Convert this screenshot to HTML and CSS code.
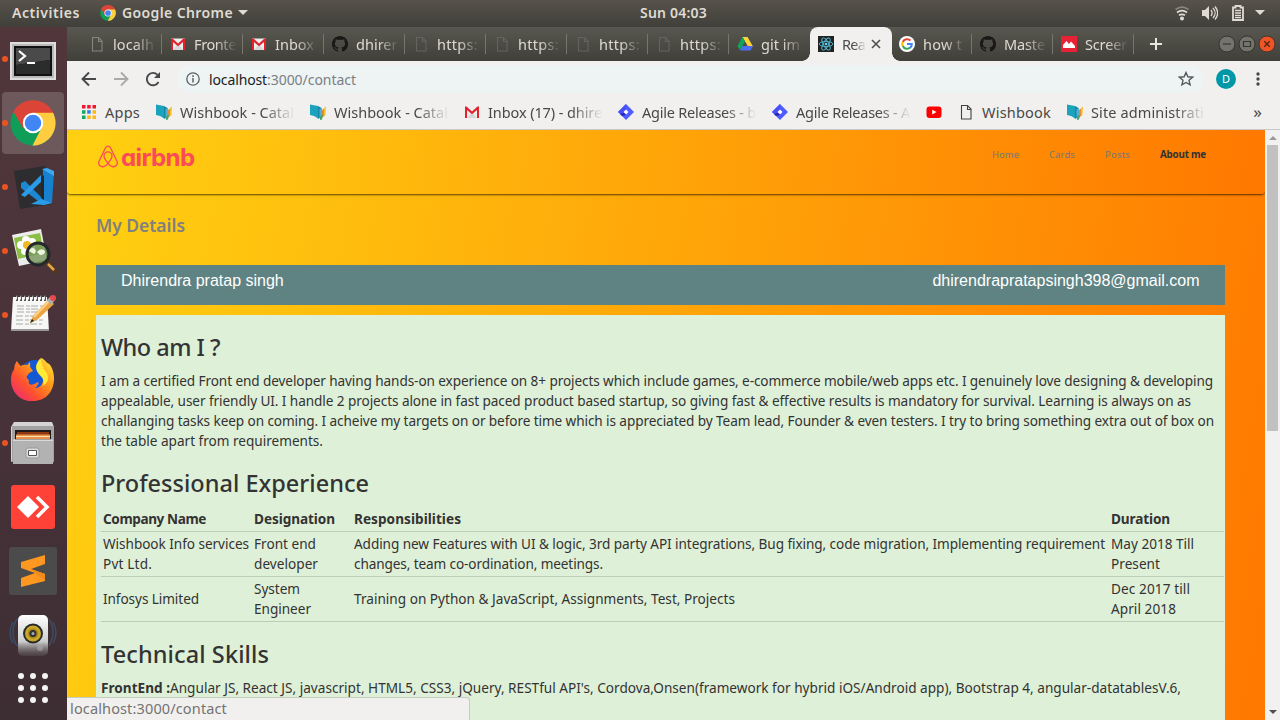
FILE: index.html
```html
<!DOCTYPE html>
<html lang="en">
<head>
<meta charset="utf-8">
<title>React App</title>
<link rel="stylesheet" href="styles.css">
</head>
<body>
<svg class="defs" width="0" height="0">
  <defs>
    <symbol id="chrome" viewBox="0 0 48 48"><circle cx="24" cy="24" r="23.5" fill="#0f9d58"/><path d="M24 24 3.600 12.200A23.500 23.500 0 0 1 44.400 12.300L45 14H24Z" fill="#db4437"/><path d="M24 13h20.800A23.500 23.500 0 0 1 23.500 47.500L33 29Z" fill="#ffcd40"/><path d="M3.600 12.200 14 30 24 24l0-11h20.800l-.4-.8A23.500 23.500 0 0 0 3.600 12.200Z" fill="#db4437"/><circle cx="24" cy="24" r="10.700" fill="#fff"/><circle cx="24" cy="24" r="8.600" fill="#4285f4"/></symbol>
    <symbol id="page" viewBox="0 0 16 16"><path d="M3.500 1.500h6l3.500 3.500v10H3.500zM9.500 1.500v4h3.500" fill="none" stroke="currentColor" stroke-width="1.100"/></symbol>
    <symbol id="gmail" viewBox="0 0 16 16"><path d="M1 2.500h14v11.500H1z" fill="#eee"/><path d="M3 14 8 8l5 6z" fill="#d8d8d8"/><path d="M1 14V2.500h1.500L8 7.500l5.500-5H15V14h-2V6L8 10.300 3 6v8z" fill="#e0222c"/></symbol>
    <symbol id="github" viewBox="0 0 16 16"><path fill="#1b1817" d="M8 0C3.580 0 0 3.580 0 8c0 3.540 2.290 6.530 5.470 7.590.4.070.55-.17.55-.38 0-.19-.01-.82-.01-1.490-2.010.37-2.530-.49-2.690-.94-.09-.23-.48-.94-.82-1.130-.28-.15-.68-.52-.01-.53.63-.01 1.080.58 1.230.82.720 1.210 1.870.87 2.330.66.070-.52.280-.87.510-1.070-1.780-.2-3.640-.89-3.640-3.950 0-.87.310-1.590.82-2.150-.08-.2-.36-1.020.08-2.120 0 0 .67-.21 2.200.82.640-.18 1.320-.27 2-.27s1.360.09 2 .27c1.530-1.040 2.200-.82 2.200-.82.440 1.100.16 1.920.08 2.120.510.56.82 1.270.82 2.150 0 3.070-1.870 3.750-3.650 3.950.290.25.540.73.540 1.480 0 1.070-.01 1.930-.01 2.200 0 .21.150.46.550.38A8.010 8.010 0 0 0 16 8c0-4.420-3.580-8-8-8z"/></symbol>
    <symbol id="wish" viewBox="0 0 16 16"><path d="M0 .5 8 2v12.500l-3-2-1-.5-4-1z" fill="#1ba2bd"/><path d="m8 2 3.500 2v9l-3.500 2z" fill="#1488a6"/><path d="m9.500 5 2.500-1v9l-2.500 1z" fill="#54afd4"/><path d="m12 6 2-1.500v7.500l-2 2z" fill="#e98b36"/><path d="m14 4 2-1.500-.5 8.500-1.500 1.500z" fill="#f4c430"/><path d="m10 12.500 3-2-1 5-2 .5z" fill="#44a66c"/></symbol>
    <symbol id="diamond" viewBox="0 0 16 16"><path d="M8 0l8 8-8 8-8-8z" fill="#4c5cff"/><path d="M8 0v8l-4 3-4-3z" fill="#4650f4"/><path d="M8 8v3l-4 1-2-2z" fill="#2626bd"/><path d="M8 5.500 10.500 8 8 10.500 5.500 8z" fill="#fff"/></symbol>
  </defs>
</svg>

<header class="topbar">
  <span class="activities" data-w="68">Activities</span>
  <svg class="app-icon" viewBox="0 0 48 48"><use href="#chrome"/></svg>
  <span data-w="111">Google Chrome</span>
  <i class="caret"></i>
  <span class="clock" data-w="67">Sun 04:03</span>
  <div class="tray">
    <svg width="16" height="16" viewBox="0 0 16 16" fill="none" stroke="#dfdbd2" stroke-width="1.700"><path d="M1.500 4.500c4-3 9-3 13 0" opacity=".4"/><path d="M3 7.500c3-2.300 7-2.300 10 0"/><path d="M5 10.300c2-1.300 4-1.300 6 0"/><circle cx="8" cy="13.500" r="1.200" fill="#dfdbd2"/></svg>
    <svg class="vol" width="17" height="16" viewBox="0 0 17 16"><path d="M1 5h3l4-4v14l-4-4H1z" fill="#dfdbd2"/><path d="M10 5c1.500 2 1.500 4 0 6M12 3c2.800 3 2.800 7 0 10M14 1.500c3.300 4 3.300 9 0 13" fill="none" stroke="#dfdbd2" stroke-width="1.300"/></svg>
    <svg class="bat" width="12" height="16" viewBox="0 0 12 16"><path d="M1 2.500h2.500V1h5v1.500H11V15H1z" fill="none" stroke="#dfdbd2" stroke-width="1.800"/><path d="M3 5.500h6M3 8h6M3 10.500h6M3 12.700h6" stroke="#dfdbd2" stroke-width="1.300"/></svg>
    <i class="caret"></i>
  </div>
</header>

<div class="desktop">
  <nav class="dock">
    <div class="launcher run"><svg width="46" height="38" viewBox="0 0 46 38"><path d="M0 0h46v38H0z" fill="#dedede"/><path d="M2 2h42v34H2z" fill="#b9b9b9"/><path d="M4 4h38v30H4z" fill="#111"/><path d="M6 6h34v12L6 23z" fill="#494a49"/><path d="M6 23l34-5v14H6z" fill="#2b2c2c"/><path d="m9 9 6 5-6 5M17 21h8" fill="none" stroke="#fff" stroke-width="2.200"/></svg></div>
    <div class="launcher run active"><svg width="46" height="46" viewBox="0 0 48 48"><use href="#chrome"/></svg></div>
    <div class="launcher run"><svg width="48" height="48" viewBox="0 0 48 48"><path d="m5 8 31-5 7 38-32 5z" fill="#2d2d30"/><path d="m34 6 11 3-2 31-10 2z" fill="#1780cf"/><path d="m33 6 5-1 7 3v5z" fill="#3ba9f3"/><path d="m12 20 4-2 17 17v6L12 25z" fill="#1c88d4"/><path d="m12 32 20-20v7L16 34zM32 36l11 4-8 2-13-1z" fill="#2b9ae7"/><path d="M35 12v25l-3-2V15z" fill="#25272a"/></svg></div>
    <div class="launcher run"><svg width="48" height="48" viewBox="0 0 48 48"><path d="m3 8 29-6 6 31-28 6z" fill="#ececec"/><path d="m5 11 26-5 4 20-26 6z" fill="#8bbf43"/><g fill="#fff"><circle cx="17" cy="13" r="4"/><circle cx="12" cy="18" r="4"/><circle cx="16" cy="24" r="4"/><circle cx="22" cy="21" r="4"/><circle cx="23" cy="15" r="4"/></g><circle cx="18" cy="18" r="4" fill="#efba23"/><path d="m37 35 9 9" stroke="#57391d" stroke-width="5" stroke-linecap="round"/><path d="m39 37 6 6" stroke="#e5a54c" stroke-width="2.500"/><circle cx="29" cy="27" r="11" fill="#75965bcc" stroke="#24282a" stroke-width="3"/><path d="M20 24q2-5 6-2 2 3-1 5zM28 25q4-5 8-1 0 4-5 4z" fill="#eef5df"/></svg></div>
    <div class="launcher run"><svg width="48" height="48" viewBox="0 0 48 48"><path d="M4 6h34l2 34H2z" fill="#f7f7f5"/><path d="M2 38h38v2H2z" fill="#999"/><path d="M7 7h30" stroke="#555" stroke-width="6" stroke-dasharray="2 2"/><path d="M7 7h30" stroke="#eee" stroke-width="3" stroke-dasharray="1 3"/><path d="M8 15h27M8 18h22M8 21h24M7 25h20M7 29h28M7 33h26" stroke="#aaa" stroke-dasharray="7 2 4 1"/><path d="m21 32 3-7L40 8l5 5-17 16z" fill="#eca341"/><path d="m25 26 16-17" stroke="#ffd284" stroke-width="2"/><path d="m38 9 4-4 4 4-4 5z" fill="#a9afb0"/><circle cx="44" cy="7" r="3" fill="#e84a4c"/><path d="m21 32 2-4 2 2z" fill="#222"/></svg></div>
    <div class="launcher"><svg width="44" height="46" viewBox="0 0 46 46" preserveAspectRatio="none"><defs><linearGradient id="fox" x1="1" x2="0" y2="1"><stop stop-color="#fff044"/><stop offset=".35" stop-color="#ff9d19"/><stop offset=".65" stop-color="#ff512f"/><stop offset="1" stop-color="#e62285"/></linearGradient></defs><circle cx="25" cy="21" r="17" fill="#1558d4"/><path d="M6 5l4 5q3-2 7-1l3-3v5l3 4-4 2-3 4 3 4c-2 3 2 6 9 1 2 0 0 4-3 6 8 0 10-8 8-12-8-5-5-13-1-18 4 2 5 5 8 6 3 3 5 9 5 14 0 14-9 23-22 23C10 46 0 36 0 24q0-7 3-10 0-5 3-9z" fill="url(#fox)"/><path d="M31 2q-9 9-1 17 6 5 3 11 8-4 5-12Q31 9 31 2z" fill="#ffea38"/></svg></div>
    <div class="launcher run"><svg width="44" height="44" viewBox="0 0 44 44"><path d="M3 1h38l2 5v34q0 1-2 1H2q-2 0-2-1V6z" fill="#d4d4d4"/><path d="M1 5h42v36H1z" fill="#a2a2a2"/><path d="M4 9h36v10H4z" fill="#1f1a19"/><path d="M6 11h32v3H6z" fill="#92360e"/><path d="M5 13.500h34v4.500H5z" fill="#e8914b"/><path d="M5 15.500h34" stroke="#ffe0ac" stroke-width="1.200"/><path d="M2 18.500h40V43H2z" fill="#b2b2b2"/><path d="M2 18.500h40v1.500H2z" fill="#d8d8d8"/><rect x="15" y="27" width="13" height="10" rx="2" fill="#ddd" stroke="#999"/><path d="M17.500 29.500h8v5h-8z" fill="#fff" stroke="#555"/></svg></div>
    <div class="launcher"><svg width="44" height="44" viewBox="0 0 44 44"><rect width="44" height="44" rx="3" fill="#ff4237"/><path d="m17 11 11 11-11 11L6 22z" fill="#fff"/><path d="m26 12 10 10-10 10" fill="none" stroke="#fff" stroke-width="3.500"/></svg></div>
    <div class="launcher"><svg width="48" height="48" viewBox="0 0 48 48"><rect width="48" height="48" rx="3" fill="#4b4b4b"/><path d="m12 15 24-7v9l-14 5 14 5v7l-24 6v-9l14-5-14-5z" fill="#ff9820"/><path d="m22 22 14 5v7l-10-8z" fill="#f08c1b"/></svg></div>
    <div class="launcher"><svg width="48" height="44" viewBox="0 0 48 44"><defs><linearGradient id="spk" x2="0" y2="1"><stop stop-color="#fff"/><stop offset=".65" stop-color="#ccc"/><stop offset="1" stop-color="#777" stop-opacity=".2"/></linearGradient></defs><path d="M8 6q-8 13 0 27M4 9q-6 11 0 21M40 6q8 13 0 27M44 9q6 11 0 21" stroke="#3d4c66" stroke-width="1.500" fill="none"/><rect x="9" y="2" width="30" height="41" rx="5" fill="url(#spk)"/><circle cx="24" cy="20.500" r="10" fill="#27292a"/><circle cx="24" cy="20.500" r="6.500" fill="#a58414" stroke="#c9a728" stroke-width="3"/><circle cx="24" cy="20.500" r="3.500" fill="#303239"/><circle cx="24" cy="20.500" r="1.500" fill="#aaa"/><circle cx="31" cy="35" r="3" fill="#aaa" opacity=".6"/></svg></div>
    <div class="launcher apps"><svg width="30" height="30" viewBox="0 0 30 30" fill="#f4f4f2"><circle cx="3" cy="3" r="3"/><circle cx="15" cy="3" r="3"/><circle cx="27" cy="3" r="3"/><circle cx="3" cy="15" r="3"/><circle cx="15" cy="15" r="3"/><circle cx="27" cy="15" r="3"/><circle cx="3" cy="27" r="3"/><circle cx="15" cy="27" r="3"/><circle cx="27" cy="27" r="3"/></svg></div>
  </nav>

  <main class="browser">
    <div class="tabs">
      <div class="tab"><svg class="pg"><use href="#page"/></svg><span class="fade"><b data-w="41">localh</b></span></div>
      <div class="tab"><svg><use href="#gmail"/></svg><span class="fade"><b data-w="42">Fronte</b></span></div>
      <div class="tab"><svg><use href="#gmail"/></svg><span class="fade"><b data-w="39">Inbox</b></span></div>
      <div class="tab"><svg><use href="#github"/></svg><span class="fade"><b data-w="41.500">dhirer</b></span></div>
      <div class="tab"><svg class="pg dim"><use href="#page"/></svg><span class="fade"><b data-w="41">https:</b></span></div>
      <div class="tab"><svg class="pg dim"><use href="#page"/></svg><span class="fade"><b data-w="41">https:</b></span></div>
      <div class="tab"><svg class="pg dim"><use href="#page"/></svg><span class="fade"><b data-w="41">https:</b></span></div>
      <div class="tab"><svg class="pg dim"><use href="#page"/></svg><span class="fade"><b data-w="41">https:</b></span></div>
      <div class="tab last"><svg viewBox="0 0 16 16"><path d="M5.500 1h5L16 10.500h-5z" fill="#ffd33a"/><path d="M5.500 1 8 5.500 3 14 .5 10z" fill="#11a75b"/><path d="M5.500 10H16l-2.500 4.500H3z" fill="#4c6ff0"/></svg><span class="fade"><b data-w="39">git im</b></span></div>
      <div class="tab current"><svg viewBox="0 0 16 16"><path d="M0 0h16v16H0z" fill="#222"/><g fill="none" stroke="#52b9d2" stroke-width=".9"><ellipse cx="8" cy="8" rx="6.800" ry="2.600"/><ellipse cx="8" cy="8" rx="6.800" ry="2.600" transform="rotate(60 8 8)"/><ellipse cx="8" cy="8" rx="6.800" ry="2.600" transform="rotate(120 8 8)"/></g><circle cx="8" cy="8" r="1.300" fill="#61dafb"/></svg><span class="fade"><b data-w="23">Rea</b></span><svg class="close" viewBox="0 0 10 10"><path d="m1 1 8 8M9 1 1 9" stroke="#505050" stroke-width="1.600"/></svg></div>
      <div class="tab"><svg viewBox="0 0 16 16"><circle cx="8" cy="8" r="8" fill="#fff"/><g fill="none" stroke-width="2"><path d="M11.500 4.500A4.800 4.800 0 0 0 3.800 6" stroke="#ea4335"/><path d="M3.800 5.800a4.800 4.800 0 0 0 0 4.400" stroke="#fbbc05"/><path d="M3.800 10a4.800 4.800 0 0 0 7.500 1.600" stroke="#34a853"/><path d="M11 11.800q2-1.500 1.800-3.800H8" stroke="#4285f4"/></g></svg><span class="fade"><b data-w="39">how t</b></span></div>
      <div class="tab"><svg><use href="#github"/></svg><span class="fade"><b data-w="41">Maste</b></span></div>
      <div class="tab"><svg viewBox="0 0 16 16"><path d="M0 0h16v16H0z" fill="#e92135"/><path d="M2 12V9l3.500-4L8 8l2-2.500L14 10v2z" fill="#fff"/></svg><span class="fade"><b data-w="42">Screer</b></span></div>
      <svg class="plus" viewBox="0 0 12 12"><path d="M6 0v12M0 6h12" stroke="#e8e6df" stroke-width="2"/></svg>
      <div class="winbtns">
        <svg viewBox="0 0 18 18"><circle cx="9" cy="9" r="8" fill="#74736c" stroke="#353430"/><path d="M5 9h8" stroke="#363530" stroke-width="1.200"/></svg>
        <svg viewBox="0 0 18 18"><circle cx="9" cy="9" r="8" fill="#74736c" stroke="#353430"/><path d="M5.500 6.500h7v5h-7z" fill="none" stroke="#363530" stroke-width="1.200"/></svg>
        <svg viewBox="0 0 18 18"><circle cx="9" cy="9" r="8" fill="#ee5426" stroke="#46352e"/><path d="m6.300 6.300 5.400 5.400m0-5.400-5.400 5.400" stroke="#4b2718" stroke-width="1.300"/></svg>
      </div>
    </div>

    <div class="toolbar">
      <svg class="nav-i" viewBox="0 0 16 16"><path d="M15 8H2M8 1.500 1.500 8 8 14.500" fill="none" stroke="#47484a" stroke-width="1.900"/></svg>
      <svg class="nav-i" viewBox="0 0 16 16"><path d="M1 8h13M8 1.500 14.500 8 8 14.500" fill="none" stroke="#a9a9a9" stroke-width="1.900"/></svg>
      <svg class="nav-i" viewBox="0 0 16 16"><path d="M13.500 11A6.200 6.200 0 1 1 12.500 3.800" fill="none" stroke="#47484a" stroke-width="1.900"/><path d="M15 1v6H9z" fill="#47484a"/></svg>
      <div class="omnibox">
        <svg class="info" viewBox="0 0 14 14"><circle cx="7" cy="7" r="6.200" fill="none" stroke="#5c6063" stroke-width="1.300"/><path d="M7 6v4.500M7 3.300v1.600" stroke="#5c6063" stroke-width="1.500"/></svg>
        <span class="url"><span class="host" data-w="58">localhost</span><span data-w="89">:3000/contact</span></span>
        <svg class="star" viewBox="0 0 16 16"><path d="m8 1.500 1.900 4.300 4.700.4-3.600 3.100 1.100 4.600L8 11.500l-4.100 2.400L5 9.300 1.400 6.200l4.700-.4z" fill="none" stroke="#55585c" stroke-width="1.400"/></svg>
      </div>
      <span class="avatar">D</span>
      <svg class="kebab" viewBox="0 0 4 14" fill="#47484a"><circle cx="2" cy="2" r="1.700"/><circle cx="2" cy="7" r="1.700"/><circle cx="2" cy="12" r="1.700"/></svg>
    </div>

    <div class="bookmarks">
      <div class="bm bm-apps"><svg viewBox="0 0 16 16"><path d="M1 1h3.500v3.500H1zM6.200 1h3.500v3.500H6.200zM11.500 1H15v3.500h-3.500z" fill="#f2162f"/><path d="M1 6.200h3.500v3.500H1zM1 11.500h3.500V15H1z" fill="#16a75c"/><path d="M6.200 6.200h3.500v3.500H6.200z" fill="#2f7df6"/><path d="M11.500 6.200H15v3.500h-3.500zM6.200 11.500h3.500V15H6.200zM11.500 11.500H15V15h-3.500z" fill="#fdb813"/></svg><b data-w="35">Apps</b></div>
      <div class="bm"><svg><use href="#wish"/></svg><span class="fade"><b data-w="114">Wishbook - Catal</b></span></div>
      <div class="bm"><svg><use href="#wish"/></svg><span class="fade"><b data-w="114">Wishbook - Catal</b></span></div>
      <div class="bm"><svg><use href="#gmail"/></svg><span class="fade"><b data-w="114">Inbox (17) - dhire</b></span></div>
      <div class="bm"><svg><use href="#diamond"/></svg><span class="fade"><b data-w="114">Agile Releases - b</b></span></div>
      <div class="bm"><svg><use href="#diamond"/></svg><span class="fade"><b data-w="114">Agile Releases - A</b></span></div>
      <div class="bm bm-icon"><svg viewBox="0 0 16 16"><rect x=".5" y="2.500" width="15" height="11.500" rx="3" fill="#f00"/><path d="M6.200 5.700v4.800L10.500 8z" fill="#fff"/></svg></div>
      <div class="bm bm-short"><svg class="pg2"><use href="#page"/></svg><b data-w="69">Wishbook</b></div>
      <div class="bm"><svg><use href="#wish"/></svg><span class="fade"><b data-w="113">Site administrati</b></span></div>
      <span class="more">»</span>
    </div>

    <div class="view">
      <div class="page">
        <div class="navbar">
          <div class="logo">
            <svg width="20" height="23" viewBox="0 0 20 23"><path d="M10 18.300C7 14.500 6 12.500 6 10.900a4 4 0 0 1 8 0c0 1.600-1 3.600-4 7.400-3 3.800-6 4.200-8 2.500-1.500-1.300-1.500-3.200-.8-4.800L7.500 2.800C8.600.5 11.400.5 12.500 2.800L18.800 16c.7 1.600.7 3.500-.8 4.800-2 1.700-5 1.300-8-2.500z" fill="none" stroke="#fb4a59" stroke-width="1.300"/></svg>
            <span class="wordmark" data-w="73.500">airbnb</span>
          </div>
          <div class="links"><a data-w="27">Home</a><a data-w="26">Cards</a><a data-w="25">Posts</a><a class="on" data-w="46">About me</a></div>
        </div>
        <div class="content">
          <h4><span data-w="89">My Details</span></h4>
          <div class="person"><span>Dhirendra pratap singh</span><span>dhirendrapratapsingh398@gmail.com</span></div>
          <section class="panel">
            <h3><span data-w="119">Who am I ?</span></h3>
            <p><span data-w="1112">I am a certified Front end developer having hands-on experience on 8+ projects which include games, e-commerce mobile/web apps etc. I genuinely love designing &amp; developing</span><br>
            <span data-w="1090">appealable, user friendly UI. I handle 2 projects alone in fast paced product based startup, so giving fast &amp; effective results is mandatory for survival. Learning is always on as</span><br>
            <span data-w="1113">challanging tasks keep on coming. I acheive my targets on or before time which is appreciated by Team lead, Founder &amp; even testers. I try to bring something extra out of box on</span><br>
            <span data-w="222">the table apart from requirements.</span></p>
            <h3><span data-w="268">Professional Experience</span></h3>
            <table>
              <tr><th class="c1"><span data-w="103">Company Name</span></th><th class="c2"><span data-w="81">Designation</span></th><th class="c3"><span data-w="107">Responsibilities</span></th><th><span data-w="59">Duration</span></th></tr>
              <tr><td><span data-w="146">Wishbook Info services</span><br><span data-w="49">Pvt Ltd.</span></td><td><span data-w="62">Front end</span><br><span data-w="64">developer</span></td><td><span data-w="751">Adding new Features with UI &amp; logic, 3rd party API integrations, Bug fixing, code migration, Implementing requirement</span><br><span data-w="249">changes, team co-ordination, meetings.</span></td><td><span data-w="83">May 2018 Till</span><br><span data-w="49">Present</span></td></tr>
              <tr><td><span data-w="96">Infosys Limited</span></td><td><span data-w="46">System</span><br><span data-w="57">Engineer</span></td><td><span data-w="381">Training on Python &amp; JavaScript, Assignments, Test, Projects</span></td><td><span data-w="79">Dec 2017 till</span><br><span data-w="65">April 2018</span></td></tr>
            </table>
            <h3><span data-w="168">Technical Skills</span></h3>
            <p><strong data-w="69">FrontEnd :</strong><span data-w="1011">Angular JS, React JS, javascript, HTML5, CSS3, jQuery, RESTful API's, Cordova,Onsen(framework for hybrid iOS/Android app), Bootstrap 4, angular-datatablesV.6,</span></p>
          </section>
        </div>
      </div>
      <div class="scrollbar"><i class="up"></i><i class="thumb"></i><i class="down"></i></div>
      <div class="status"><span data-w="157">localhost:3000/contact</span></div>
    </div>
  </main>
</div>
<script src="fit.js"></script>
</body>
</html>
```
FILE: styles.css
```css
* { box-sizing: border-box; }
body { margin: 0; width: 1280px; height: 720px; overflow: hidden; display: flex; flex-direction: column; font-family: "Noto Sans", "Open Sans", sans-serif; }
.defs { position: absolute; }
svg { display: block; flex: none; }
[data-w] { display: inline-block; white-space: pre; }
b { font-weight: 400; }

.topbar { height: 27px; flex: none; display: flex; align-items: center; padding: 0 0 2px 12px; background: linear-gradient(#57534b, #403f3a); color: #dfdbd2; font-size: 14px; font-weight: 600; }
.app-icon { width: 16px; height: 16px; margin: 0 6px 0 20px; }
.caret { border: 5px solid transparent; border-top-color: #dfdbd2; border-bottom: 0; margin-left: 5px; }
.clock { margin-left: 392px; }
.tray { margin-left: auto; display: flex; align-items: center; padding-right: 15px; }
.vol { margin-left: 11px; }
.bat { margin: 0 6px 0 14px; }

.desktop { flex: 1; display: flex; min-height: 0; }
.dock { width: 67px; flex: none; display: flex; flex-direction: column; background: linear-gradient(#51373b, #49333a 45%, #3d2e33); }
.launcher { width: 62px; height: 62px; margin: 1px 0 1px 2px; flex: none; display: flex; align-items: center; justify-content: center; border-radius: 4px; position: relative; }
.launcher:first-child { padding-top: 4px; }
.launcher.active { background: #6d585c; }
.run::before { content: ""; position: absolute; left: 0; top: 28px; width: 6px; height: 6px; border-radius: 3px; background: #e95420; }
.launcher.apps { height: 44px; margin-top: -1px; }

.browser { flex: 1; min-width: 0; display: flex; flex-direction: column; background: #f2f0ee; }
.tabs { height: 34px; flex: none; display: flex; align-items: center; padding-left: 14px; background: linear-gradient(#585850, #403f39); color: #dfdbd2; font-size: 14.500px; }
.tab { width: 81px; height: 34px; padding: 0 0 1px 8px; display: flex; align-items: center; flex: none; position: relative; }
.tab > svg { width: 16px; height: 16px; margin-right: 8px; }
.tab::after { content: ""; position: absolute; right: 0; top: 7px; width: 1px; height: 20px; background: #77766d; }
.tab.last::after, .tab.current::after { display: none; }
.fade { display: block; overflow: hidden; white-space: nowrap; width: 43px; -webkit-mask-image: linear-gradient(90deg, #000 50%, transparent); mask-image: linear-gradient(90deg, #000 50%, transparent); }
.pg { color: #85847d; }
.pg.dim { color: #64645e; }
.tab.current { background: #f2f0ee; color: #4c4c4c; border-radius: 8px 8px 0 0; width: 82px; margin-right: -1px; z-index: 1; }
.tab.current::before { content: ""; position: absolute; left: -8px; right: -8px; bottom: 0; height: 8px; background: radial-gradient(circle at 0 0, transparent 7.500px, #f2f0ee 8px) left / 8px 8px no-repeat, radial-gradient(circle at 100% 0, transparent 7.500px, #f2f0ee 8px) right / 8px 8px no-repeat; }
.current .fade { width: 24px; }
.tab .close { width: 10px; height: 10px; margin: 0 0 0 5px; }
.plus { width: 12px; height: 12px; margin-left: 16px; }
.winbtns { display: flex; gap: 2px; margin: 0 4px 0 auto; }
.winbtns svg { width: 18px; height: 18px; }

.toolbar { height: 37px; flex: none; display: flex; align-items: center; padding: 0 0 1px 14px; }
.nav-i { width: 16px; height: 16px; margin-right: 16px; }
.omnibox { height: 28px; width: 1027px; border-radius: 14px; background: #eef3f4; display: flex; align-items: center; padding: 0 10px 0 9px; }
.info { width: 14px; height: 14px; }
.url { margin-left: 9px; color: #7b8084; font-size: 14px; display: flex; }
.host { color: #202124; }
.star { width: 16px; height: 16px; margin-left: auto; }
.avatar { width: 20px; height: 20px; border-radius: 10px; margin-left: 12px; background: #0097a7; color: #fff; font-size: 11px; line-height: 20px; text-align: center; }
.kebab { width: 4px; height: 14px; margin-left: 20px; }

.bookmarks { height: 32px; flex: none; display: flex; align-items: center; padding: 0 18px 4px 14px; border-bottom: 1px solid #c8c8c8; color: #484848; font-size: 14.500px; }
.bm { width: 154px; display: flex; align-items: center; flex: none; }
.bm > svg { width: 16px; height: 16px; margin-right: 8px; }
.bm .fade { width: 115px; -webkit-mask-image: linear-gradient(90deg, #000 72%, transparent); mask-image: linear-gradient(90deg, #000 72%, transparent); }
.bm.bm-apps { width: 75px; }
.bm.bm-icon { width: 32px; }
.bm.bm-short { width: 109px; }
.pg2 { color: #444; }
.more { margin-left: auto; font-size: 17px; line-height: 20px; }

.view { flex: 1; min-height: 0; display: flex; position: relative; }
.page { flex: 1; min-width: 0; overflow: hidden; background: linear-gradient(100deg, #ffd111, #ff7800); color: #333; font-size: 13.600px; line-height: 20px; }
.navbar { height: 64px; border-radius: 4px; display: flex; justify-content: space-between; padding: 0 59px 0 31px; background: linear-gradient(94deg, #ffd111, #ff7800); box-shadow: 0 1px 2px rgba(0, 0, 0, .65); }
.logo { display: flex; padding-top: 15px; gap: 3px; height: 40px; }
.wordmark { font: 700 24px/25px Inter, sans-serif; font-feature-settings: "cv11"; color: #fb4a59; }
.links { display: flex; gap: 30px; font-size: 9.500px; line-height: 14px; padding-top: 18px; color: #777; }
.links .on { color: #333; font-weight: 700; font-size: 9.800px; }
.content { padding: 21px 40px 0 29px; }
h4 { margin: 0; font-size: 17.500px; line-height: 20px; font-weight: 600; color: #808080; }
.person { margin-top: 30px; height: 40px; padding: 6px 25.500px 6px 25px; display: flex; justify-content: space-between; background: #5f8383; color: #fff; font: 16px/20px "Liberation Sans", sans-serif; }
.panel { margin-top: 10px; height: 430px; padding: 0 0 0 5px; background: #dff0d8; }
h3 { margin: 0; font-size: 23.500px; font-weight: 550; line-height: 26px; padding-top: 19px; margin-bottom: 11px; }
p { margin: 0; }
.panel > p { height: 80px; }
table { width: 1123px; border-collapse: collapse; table-layout: fixed; }
td, th { text-align: left; padding: 2px; border-bottom: 1px solid #bdceb8; vertical-align: middle; }
.c1 { width: 151px; }
.c2 { width: 100px; }
.c3 { width: 757px; }

.scrollbar { width: 15px; background: #f1f1f1; position: relative; }
.scrollbar i { position: absolute; }
.up { left: 4px; top: 6px; border: 4px solid transparent; border-bottom-color: #999; border-top: 0; }
.thumb { left: 2px; top: 15px; width: 11px; height: 286px; background: #c1c1c1; }
.down { left: 4px; bottom: 6px; border: 4px solid transparent; border-top-color: #505050; border-bottom: 0; }
.status { position: absolute; left: 0; bottom: 0; width: 403px; height: 23px; padding-left: 3px; background: #f2f0ee; border: 1px solid #c5ccc0; border-width: 1px 1px 0 0; border-radius: 0 4px 0 0; color: #737373; font-size: 14.500px; line-height: 21px; }
```
FILE: fit.js
```js
// Tracks each label so that it fills its intended measure.
document.querySelectorAll("[data-w]").forEach(function (el) {
  var width = el.getBoundingClientRect().width;
  var gap = (Number(el.dataset.w) - width) / el.textContent.length;
  el.style.letterSpacing = gap + "px";
});
```
